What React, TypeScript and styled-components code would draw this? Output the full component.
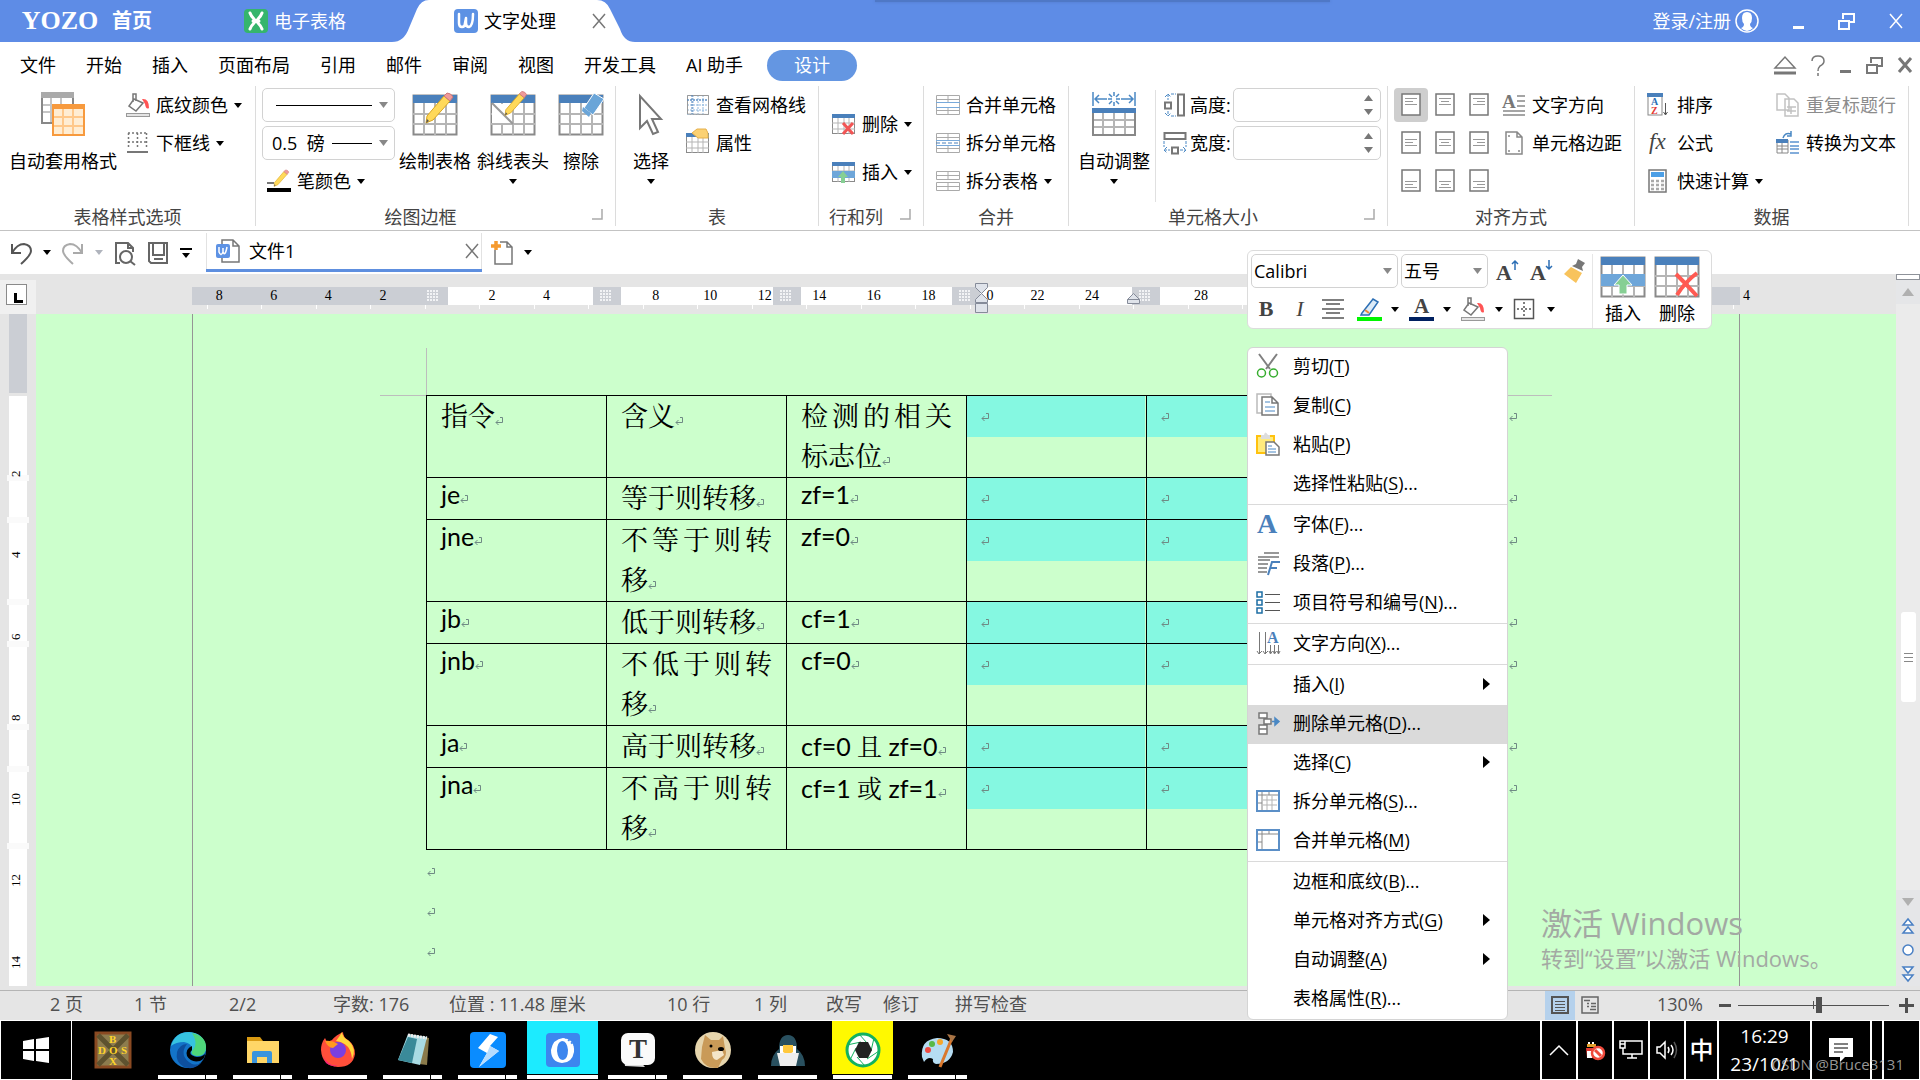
import React from 'react';
import styled, { createGlobalStyle, css } from 'styled-components';

const UI_FONT = '"Open Sans", "Noto Sans CJK SC", sans-serif';
const DOC_FONT = 'Lato, "Noto Serif CJK SC", "Noto Sans CJK SC", sans-serif';
const SERIF = '"Liberation Serif", "Noto Sans CJK SC", serif';

const GlobalStyle = createGlobalStyle`
  *, *::before, *::after { box-sizing: border-box; }
  body { margin: 0; font: 18px/24px ${UI_FONT}; color: #000; background: #e5e5e5; }
  button, input, select { font: inherit; color: inherit; margin: 0; padding: 0; border: 0; background: none; }
  svg { display: block; flex: none; overflow: visible; }
`;

const App_ = styled.div`
  position: relative;
  min-height: 100vh;
  display: flex;
  flex-direction: column;
  overflow: hidden;
`;

/* ---------- title bar ---------- */
const TitleBar = styled.header`
  display: flex;
  align-items: center;
  height: 42px;
  background: #5e8ce6;
  color: #fff;
  flex: none;
`;
const TopShade = styled.div`
  position: absolute;
  top: 0;
  left: 875px;
  width: 455px;
  height: 2px;
  background: #4f78c6;
  box-shadow: 0 0 3px #4f78c6;
`;
const Brand = styled.button`
  display: flex;
  align-items: center;
  gap: 13px;
  margin-left: 21px;
  width: 223px;
  font-size: 20px;
  font-weight: 700;
  white-space: nowrap;
`;
const BrandName = styled.span`
  font: 700 26px/30px ${SERIF};
  width: 78px;
`;
const AppTab = styled.button`
  display: flex;
  align-items: center;
  gap: 6px;
  width: 148px;
  white-space: nowrap;
`;
const ActiveTab = styled.div`
  position: relative;
  display: flex;
  align-items: center;
  width: 243px;
  height: 42px;
  padding-left: 62px;
  gap: 36px;
  color: #000;
`;
const TabShape = styled.svg`
  position: absolute;
  inset: 0;
`;
const TabMain = styled.button`
  position: relative;
  display: flex;
  align-items: center;
  gap: 6px;
  white-space: nowrap;
`;
const PlainButton = styled.button`
  position: relative;
  display: flex;
  align-items: center;
`;
const WindowControls = styled.div`
  display: flex;
  align-items: center;
  margin-left: auto;
  padding-right: 17px;
  gap: 34px;
`;
const Login = styled.button`
  display: flex;
  align-items: center;
  gap: 4px;
  white-space: nowrap;
`;

/* ---------- menu row ---------- */
const MenuRow = styled.nav`
  display: flex;
  align-items: center;
  height: 44px;
  padding: 2px 8px 0 20px;
  background: #fff;
  flex: none;
`;
const MenuTabs = styled.div`
  display: flex;
  gap: 30px;
  align-items: center;
`;
const MenuTab = styled.button`
  white-space: nowrap;
`;
const ActiveMenuTab = styled.button`
  margin-left: 24px;
  width: 90px;
  height: 31px;
  border-radius: 16px;
  background: #6496e2;
  color: #fff;
`;
const DocControls = styled.div`
  display: flex;
  align-items: center;
  gap: 15px;
  margin-left: auto;
`;

/* ---------- ribbon ---------- */
const Ribbon = styled.div`
  display: flex;
  height: 145px;
  background: #fff;
  border-bottom: 1px solid #c3c3c3;
  flex: none;
`;
const Section = styled.section<{ $w: number }>`
  flex: none;
  width: ${(p) => p.$w}px;
  height: 140px;
  border-right: 1px solid #dcdcdc;
  display: flex;
  flex-direction: column;
`;
const SectionBody = styled.div<{ $left: number; $right?: number; $spread?: boolean }>`
  display: flex;
  height: 114px;
  padding-left: ${(p) => p.$left}px;
  padding-right: ${(p) => p.$right ?? 0}px;
  justify-content: ${(p) => (p.$spread ? 'space-between' : 'flex-start')};
`;
const SectionFoot = styled.div`
  display: flex;
  margin-top: 8px;
  height: 18px;
  line-height: 18px;
  color: #444;
`;
const SectionLabel = styled.span`
  flex: 1;
  text-align: center;
  white-space: nowrap;
`;
const Launcher = styled.button`
  width: 30px;
  display: flex;
  padding: 1px 0 0 7px;
`;
const Stack = styled.div<{ $gap?: number; $top?: number }>`
  display: flex;
  flex-direction: column;
  align-items: flex-start;
  margin-left: ${(p) => p.$gap ?? 0}px;
  padding-top: ${(p) => p.$top ?? 0}px;
`;
const RowButton = styled.button<{ $h?: number; $pad?: number }>`
  display: flex;
  align-items: center;
  gap: 6px;
  height: ${(p) => p.$h ?? 38}px;
  padding-left: ${(p) => p.$pad ?? 0}px;
  white-space: nowrap;
  &:disabled { color: #8c8c8c; }
`;
const BigButton = styled.button<{ $w: number; $gap?: number }>`
  display: flex;
  flex-direction: column;
  align-items: center;
  width: ${(p) => p.$w}px;
  margin-left: ${(p) => p.$gap ?? 0}px;
  padding-top: 6px;
  white-space: nowrap;
`;
const BigLabel = styled.span`
  margin: 12px 0 5px;
  line-height: 26px;
`;
const FieldRow = styled.div`
  display: flex;
  align-items: center;
  height: 38px;
`;
const SelectShell = styled.div<{ $w: number }>`
  position: relative;
  display: flex;
  align-items: center;
  width: ${(p) => p.$w}px;
  height: 34px;
  border: 1px solid #d2d2d2;
  border-radius: 5px;
  background: #fff;
  select {
    appearance: none;
    width: 100%;
    height: 32px;
    line-height: 30px;
    outline: 0;
  }
`;
const SelectDecor = styled.svg`
  position: absolute;
  right: 5px;
  top: 0;
  pointer-events: none;
`;
const LineSelect = styled.select`
  padding-left: 9px;
`;
const FontSelect = styled.select`
  padding-left: 2px;
`;
const Divider = styled.div`
  width: 1px;
  height: 112px;
  margin: 4px 7px 0 5px;
  background: #e0e0e0;
`;
const FieldLabel = styled.label`
  display: flex;
  align-items: center;
  gap: 3px;
  width: 70px;
  white-space: nowrap;
`;
const SizeField = styled.div`
  display: flex;
  width: 148px;
  height: 34px;
  border: 1px solid #d2d2d2;
  border-radius: 5px;
  input { flex: 1; min-width: 0; padding-left: 8px; outline: 0; }
`;
const Spinner = styled.div`
  display: flex;
  flex-direction: column;
  justify-content: center;
  gap: 8px;
  padding-right: 7px;
`;
const AlignGrid = styled.div`
  display: grid;
  grid-template-columns: repeat(3, 34px);
  grid-template-rows: repeat(3, 38px);
  align-items: center;
`;
const AlignButton = styled.button<{ $on?: boolean }>`
  display: flex;
  align-items: center;
  justify-content: center;
  height: 34px;
  border-radius: 4px;
  background: ${(p) => (p.$on ? '#cecece' : 'none')};
`;

/* ---------- quick access and document tabs ---------- */
const QuickBar = styled.div`
  display: flex;
  align-items: center;
  height: 43px;
  background: #fff;
  flex: none;
`;
const QuickTools = styled.div`
  display: flex;
  align-items: center;
  gap: 11px;
  width: 206px;
  padding-left: 10px;
`;
const DocTab = styled.div`
  display: flex;
  align-items: center;
  width: 276px;
  height: 39px;
  padding: 0 3px 0 10px;
  border-bottom: 3px solid #5e8fdf;
  box-shadow: inset 1px 0 #e2e2e2, inset -1px 0 #e2e2e2;
`;
const DocTabName = styled.button`
  display: flex;
  align-items: center;
  gap: 9px;
  flex: 1;
`;
const NewDoc = styled.button`
  display: flex;
  align-items: center;
  gap: 9px;
  margin-left: 9px;
`;

/* ---------- workspace ---------- */
const Workspace = styled.div`
  flex: 1;
  display: grid;
  grid-template-columns: 36px 1fr 24px;
  grid-template-rows: 40px 1fr;
  padding-bottom: 4px;
  background: #e5e5e5;
`;
const Corner = styled.div`
  display: flex;
  margin-top: 6px;
  padding: 4px 0 0 6px;
  background: #f0f0f0;
`;
const TabStop = styled.button`
  width: 21px;
  height: 21px;
  border: 1px solid #8a8a8a;
  background: #fff;
  display: flex;
  padding: 8px 0 0 7px;
`;
const HRuler = styled.div`
  display: flex;
  justify-content: center;
  padding-top: 13px;
  overflow: hidden;
`;
const HTrack = styled.div`
  position: relative;
  display: flex;
  width: 1548px;
  height: 18px;
  background: #fff;
`;
const Seg = styled.div<{ $w: number; $c?: string }>`
  width: ${(p) => p.$w}px;
  height: 18px;
  background: ${(p) => p.$c ?? 'transparent'};
  display: flex;
  justify-content: flex-end;
  padding: 3px 9px 0 0;
`;
const HLabels = styled.div`
  position: absolute;
  left: 0;
  top: 0;
  width: 1582px;
  display: flex;
  font: 14px/18px ${SERIF};
  span { flex: 1; text-align: center; white-space: pre; }
`;
const HTicks = styled.div`
  position: absolute;
  left: 15px;
  right: 0;
  top: 18px;
  height: 4px;
  background: repeating-linear-gradient(90deg, #fff 0 1px, transparent 1px 54px, #fff 54px 55px, transparent 55px 109px);
`;
const RulerMarker = styled.svg<{ $x: number; $y: number }>`
  position: absolute;
  left: ${(p) => p.$x}px;
  top: ${(p) => p.$y}px;
`;
const VRuler = styled.div`
  position: relative;
  display: flex;
  flex-direction: column;
  align-items: center;
  overflow: hidden;
`;
const VBlock = styled.div<{ $h?: number; $gray?: boolean }>`
  width: 18px;
  ${(p) => (p.$h ? css`height: ${p.$h}px;` : css`flex: 1;`)}
  background: ${(p) => (p.$gray ? '#cbced4' : '#fff')};
`;
const VGap = styled.div`
  height: 3px;
`;
const VMark = styled.div`
  width: 22px;
  height: 6px;
  background: #fafafa;
`;
const VLabels = styled.div`
  position: absolute;
  left: 7px;
  top: -44px;
  font: 13px/18px ${SERIF};
  span {
    display: flex;
    justify-content: center;
    width: 18px;
    height: 81px;
    writing-mode: vertical-rl;
    transform: rotate(180deg);
  }
  span:nth-child(even) { height: 82px; }
`;
const Canvas = styled.main`
  background: #ccffcc;
  display: flex;
  justify-content: center;
`;
const Page = styled.div`
  width: 1548px;
  border: solid #959595;
  border-width: 0 1px;
  padding-top: 34px;
`;
const MarginTop = styled.div`
  width: 47px;
  height: 47px;
  margin-left: 233px;
  border-left: 1px solid #bdbdbd;
`;
const TableLine = styled.div`
  display: flex;
  margin-left: 187px;
`;
const MarginRule = styled.div`
  width: 46px;
  height: 1px;
  background: #bdbdbd;
`;
const DocTable = styled.table`
  border-collapse: collapse;
  table-layout: fixed;
  width: 1127px;
  font: 27px/40px ${DOC_FONT};
  td { padding: 0; vertical-align: top; }
`;
const Tr = styled.tr<{ $tall?: boolean }>`
  height: ${(p) => (p.$tall ? 82 : 42)}px;
`;
const Td = styled.td`
  border: 1px solid #000;
`;
const CellText = styled.div<{ $latin?: boolean; $mixed?: boolean }>`
  height: 40px;
  margin: 0 14px;
  text-align: justify;
  font-size: ${(p) => (p.$latin || p.$mixed ? 25 : 27)}px;
  line-height: ${(p) => (p.$latin ? 32 : 40)}px;
  svg { margin-right: -9px; }
`;
const Selected = styled.div`
  height: 41px;
  padding-left: 14px;
  margin-right: 1px;
  line-height: 32px;
  background: #85f8e1;
`;
const EndMark = styled.div<{ $ruled?: boolean }>`
  padding-left: 2px;
  line-height: 32px;
  ${(p) => p.$ruled && css`box-shadow: 0 -1px #bdbdbd;`}
`;
const Paras = styled.div`
  margin-left: 234px;
  font: 18px/40px ${DOC_FONT};
`;
const MarkSvg = styled.svg`
  display: inline-block;
`;

const Scroll = styled.div`
  grid-column: 3;
  grid-row: 1 / 3;
  display: flex;
  flex-direction: column;
  align-items: center;
  background: #ebebeb;
`;
const SplitHandle = styled.div`
  width: 24px;
  height: 6px;
  border: 1px solid #8e9299;
  background: #fff;
`;
const ScrollButton = styled.button`
  display: flex;
  justify-content: center;
  align-items: center;
  width: 24px;
  height: 24px;
  background: #e5e6e8;
`;
const ScrollThumb = styled.div`
  display: flex;
  align-items: center;
  justify-content: center;
  width: 15px;
  height: 90px;
  margin: 308px 0 auto;
  border-radius: 3px;
  background: #fff;
`;

/* ---------- status bar ---------- */
const StatusBar = styled.footer`
  display: flex;
  align-items: center;
  height: 30px;
  border-top: 1px solid #b4b4b4;
  background: #e5e5e5;
  color: #505050;
  padding: 0 6px 3px 50px;
  flex: none;
`;
const Stat = styled.span<{ $w: number }>`
  width: ${(p) => p.$w}px;
  white-space: nowrap;
`;
const StatusRight = styled.div`
  display: flex;
  align-items: center;
  margin-left: auto;
`;
const ViewButton = styled.button<{ $on?: boolean }>`
  width: 30px;
  height: 29px;
  display: flex;
  align-items: center;
  justify-content: center;
  margin-top: 2px;
  background: ${(p) => (p.$on ? '#b5d1ec' : 'none')};
`;
const Percent = styled.span`
  width: 62px;
  margin-left: 52px;
`;
const Zoom = styled.input`
  appearance: none;
  width: 151px;
  height: 18px;
  margin: 2px 10px 0 7px;
  background: linear-gradient(#505050, #505050) 0 9px / 100% 1px no-repeat,
    linear-gradient(#505050, #505050) 50% 5px / 1px 8px no-repeat;
  &::-webkit-slider-thumb {
    appearance: none;
    width: 6px;
    height: 16px;
    background: #505050;
  }
`;

/* ---------- taskbar ---------- */
const Taskbar = styled.footer`
  position: relative;
  display: flex;
  height: 60px;
  background: #000;
  border-top: 1px solid #fff;
  color: #fff;
  flex: none;
`;
const Start = styled.button`
  width: 72px;
  border: 1px solid #fff;
  border-top: 0;
  display: flex;
  align-items: center;
  justify-content: center;
`;
const Apps = styled.div`
  display: flex;
  padding-left: 3px;
`;
const TaskApp = styled.button<{ $bg?: string; $line?: 'full' | 'split' | 'wide' }>`
  position: relative;
  width: 75px;
  display: flex;
  justify-content: center;
  padding-top: 11px;
  &::before {
    content: '';
    position: absolute;
    inset: 0 ${(p) => (p.$line === 'wide' ? 2 : 7)}px 6px;
    background: ${(p) => p.$bg ?? 'none'};
  }
  &::after {
    content: '';
    position: absolute;
    left: ${(p) => (p.$line === 'wide' ? 2 : 8)}px;
    right: ${(p) => (p.$line === 'wide' ? 2 : 8)}px;
    bottom: 1px;
    height: 4px;
    background: ${(p) =>
      !p.$line ? 'none' : p.$line === 'split' ? 'linear-gradient(90deg, #fff 0 47px, #000 47px 48px, #fff 48px)' : '#fff'};
  }
  svg { position: relative; }
`;
const Tray = styled.div`
  display: flex;
  margin-left: auto;
  border-right: 1px solid #fff;
`;
const TrayItem = styled.button<{ $w: number }>`
  width: ${(p) => p.$w}px;
  border-left: 2px solid #fff;
  border-bottom: 1px solid #fff;
  display: flex;
  align-items: center;
  justify-content: center;
  font-size: 24px;
  font-weight: 500;
`;
const Clock = styled(TrayItem)`
  flex-direction: column;
  font-size: 19px;
  font-weight: 400;
  line-height: 28px;
`;
const Credit = styled.span`
  position: absolute;
  right: 16px;
  bottom: 4px;
  font-size: 15px;
  line-height: 24px;
  color: rgba(190, 190, 190, 0.8);
`;

/* ---------- floating surfaces ---------- */
const MiniBar = styled.div`
  position: absolute;
  left: 1247px;
  top: 250px;
  display: flex;
  width: 465px;
  height: 79px;
  padding: 3px 3px 0;
  border: 1px solid #dcdcdc;
  border-radius: 6px;
  background: #fff;
`;
const MiniLeft = styled.div`
  width: 342px;
  margin-right: 3px;
  border-right: 1px solid #e6e6e6;
`;
const MiniRow = styled.div<{ $gap: number; $h: number }>`
  display: flex;
  align-items: center;
  height: ${(p) => p.$h}px;
  gap: ${(p) => p.$gap}px;
`;
const MiniButton = styled.button<{ $w: number }>`
  width: ${(p) => p.$w}px;
  height: 34px;
  display: flex;
  align-items: center;
  justify-content: space-between;
`;
const Letter = styled.span<{ $italic?: boolean }>`
  width: 100%;
  text-align: center;
  font: 700 22px/26px ${SERIF};
  color: #444;
  ${(p) => p.$italic && css`font-style: italic; font-weight: 400;`}
`;
const MiniBig = styled.button`
  width: 54px;
  display: flex;
  flex-direction: column;
  align-items: center;
  gap: 3px;
`;
const Menu = styled.div`
  position: absolute;
  left: 1247px;
  top: 347px;
  width: 261px;
  border: 1px solid #d4d4d4;
  border-radius: 6px;
  background: #fff;
  z-index: 2;
`;
const Item = styled.button<{ $on?: boolean }>`
  display: flex;
  align-items: center;
  width: 100%;
  height: 39px;
  padding: 0 17px 3px 8px;
  background: ${(p) => (p.$on ? '#dadada' : 'none')};
  text-align: left;
  u { text-underline-offset: 3px; text-decoration-thickness: 1px; }
`;
const ItemIcon = styled.span`
  width: 37px;
  height: 24px;
`;
const ItemText = styled.span`
  flex: 1;
  white-space: nowrap;
`;
const Sep = styled.hr`
  height: 1px;
  margin: 0 0 1px;
  border: 0;
  background: #dadada;
`;
const Activate = styled.div`
  position: absolute;
  left: 1541px;
  top: 902px;
  color: #a3a9a3;
  pointer-events: none;
  white-space: nowrap;
`;
const ActivateTitle = styled.div`
  font-size: 31px;
  line-height: 42px;
`;
const ActivateText = styled.div`
  font-size: 22px;
  line-height: 28px;
`;

/* ---------- drawings ---------- */
const Caret = ({ c = '#000' }: { c?: string }) => (
  <svg width="8" height="5"><path d="M0 0h8L4 5z" fill={c} /></svg>
);
const Mark = () => (
  <MarkSvg width="9" height="9" viewBox="0 0 9 9" fill="none" stroke="#6f8a84">
    <path d="M5 .5h2.500v5H1M3.500 3 1 5.500 3.500 8" />
  </MarkSvg>
);
const Cross = ({ s = 14, c = '#777', w = 1.5 }: { s?: number; c?: string; w?: number }) => (
  <svg width={s} height={s} viewBox="0 0 14 14" stroke={c} strokeWidth={w}><path d="M1 0l12 14M13 0L1 14" /></svg>
);
const Restore = ({ c }: { c: string }) => (
  <svg width="17" height="17" fill="none" stroke={c} strokeWidth="2"><path d="M5 6V1h11v8h-4M1 8h10v8H1z" /></svg>
);
const Dash = ({ c, w = 11 }: { c: string; w?: number }) => (
  <svg width={w} height="19"><path d={`M0 15.500h${w}`} stroke={c} strokeWidth="3" /></svg>
);
const SheetLogo = () => (
  <svg width="24" height="24"><rect width="24" height="24" rx="4" fill="#35b56c" /><path d="M6 4q1 3 4 6 2 2 0 4-3 3-4 6M18 4q-1 3-4 6-2 2 0 4 3 3 4 6M9 12h6" stroke="#fff" strokeWidth="3" fill="none" strokeLinecap="round" /></svg>
);
const WordLogo = ({ s = 24 }: { s?: number }) => (
  <svg width={s} height={s} viewBox="0 0 24 24"><rect width="24" height="24" rx="4" fill="#5d92e4" /><path d="M5 5v9q0 4 3 4t3-4l1-5M12 9v5q0 4 3 4 4-1 4-13" stroke="#fff" strokeWidth="2.500" fill="none" strokeLinecap="round" /></svg>
);

type GridProps = { w?: number; h?: number; head?: string; line?: string; children?: React.ReactNode };
const Grid = ({ w = 44, h = 40, head = '#4a80bb', line = '#b5b5b5', children }: GridProps) => {
  const t = h / 5;
  const big = w > 30;
  const xs = [1, 2, 3].map((i) => `M${Math.round((w * i) / 4)} ${t}V${h}`).join('');
  const ys = [1, 2].map((i) => `M0 ${Math.round(t + ((h - t) * i) / 3)}H${w}`).join('');
  return (
    <svg width={big ? w : 24} height={big ? 44 : 24} viewBox={big ? `0 -3 ${w} 44` : '0 -2 24 24'}>
      <rect x=".5" y=".5" width={w - 1} height={h - 1} fill="#fff" stroke="#8a8a8a" strokeWidth={big ? 2 : 1} />
      <path d={xs + ys} stroke={line} strokeWidth={big ? 2 : 1} fill="none" />
      <rect width={w} height={t} fill={head} />
      {children}
    </svg>
  );
};
const Pencil = ({ t }: { t?: string }) => (
  <g transform={t}><path d="M0 28l1-7L18 1l6 5L7 25z" fill="#ffd95a" stroke="#d9a520" /><path d="M18 1l3-3q4 0 6 4l-3 4z" fill="#ef9a9a" stroke="#cf7777" /><path d="M0 28l1-4 2 2z" fill="#555" /></g>
);
const AutoFormat = () => (
  <svg width="44" height="44" fill="#fff">
    <rect x="1" y="1" width="31" height="30" stroke="#888" strokeWidth="2" /><path d="M0 0h33v6H0z" fill="#aaa" /><path d="M2 13h29M2 20h29M10 6v24M20 6v24" stroke="#c5c5c5" strokeWidth="2" />
    <rect x="12" y="13" width="31" height="30" fill="#ffedd3" stroke="#f79a3e" strokeWidth="2" /><path d="M11 12h33v5H11z" fill="#f79a3e" /><path d="M13 25h29M13 34h29M22 17v25M32 17v25" stroke="#ffc88a" strokeWidth="2" />
  </svg>
);
const Bucket = () => (
  <svg width="24" height="24" fill="none"><path d="M16 6q7-1 7 9-3 2-4-4z" fill="#ff5454" /><path d="M8 6l9 4-7 8-7-5zM7 9V1h3v7" fill="#fff" stroke="#777" strokeWidth="1.500" /><rect x=".5" y="20.500" width="23" height="3" fill="#e4e4e4" stroke="#999" /></svg>
);
const BottomBorder = () => (
  <svg width="24" height="24" stroke="#777" fill="none"><path d="M2 2h19M2 11h19M2.500 2v16M11.500 2v16M20.500 2v16" strokeWidth="1.500" strokeDasharray="2 2" /><path d="M1 21h21" strokeWidth="2" /></svg>
);
const PenColor = () => (
  <svg width="24" height="24"><path d="M0 14h7" stroke="#777" strokeWidth="2" /><Pencil t="translate(7 2) scale(.55)" /><path d="M0 19h24v4H0z" /></svg>
);
const DrawTable = () => <Grid><Pencil t="translate(13 0)" /></Grid>;
const DiagonalHead = () => <Grid><path d="M1 9h20v19H1z" fill="#fff" /><path d="M1 8l21 21" stroke="#999" strokeWidth="2" /><Pencil t="translate(14 -2) scale(.8)" /></Grid>;
const Eraser = () => <Grid><path d="M35-2l10 6-11 16-9-7z" fill="#6aa5d8" stroke="#fff" /><path d="M24 12l8 6-2 4-7-6z" fill="#6aa5d8" /></Grid>;
const Cursor = () => (
  <svg width="24" height="44" fill="#fff" stroke="#777" strokeWidth="2"><path d="M1 4v32l7-7 6 13 5-2-6-13h9z" /></svg>
);
const GridLines = () => (
  <svg width="24" height="24" fill="none"><path d="M1.500 2.500h21v19h-21zM1 7h21M1 12h21M1 17h21M7 2v19M12 2v19M17 2v19" stroke="#8db6dd" strokeDasharray="2 1" /><path d="M1.500 21V2.500h21V21.500z" stroke="#9a9a9a" /><path d="M1 7h21M6 2v19" stroke="#4a80bb" strokeDasharray="2 1" /></svg>
);
const Props = () => <Grid w={23} h={20}><path d="M6 0l5-4h9q3 4 2 9h-10z" fill="#fbd173" stroke="#e5b04c" /></Grid>;
const DelSmall = () => <Grid w={23} h={20}><path d="M11 9l10 11M21 9L11 20" stroke="#f25555" strokeWidth="3" /></Grid>;
const InsSmall = () => <Grid w={23} h={20}><path d="M0 9h23v7H0z" fill="#6ea6d9" /><path d="M11 9l5 6h-3v6H9v-6H6z" fill="#86cf94" /></Grid>;
const MergeIcon = ({ kind }: { kind: 'merge' | 'split' | 'table' }) => (
  <svg width="24" height="24" fill="none" stroke="#aaa">
    {kind === 'table' ? (
      <path d="M.5 2.500h23v8H.5zM.5 13.500h23v8H.5zM.5 6.500h23M.5 17.500h23M12 2v8M12 13v8" />
    ) : (
      <>
        <path d="M.5 2.500h23v19H.5zM.5 6.500h23M.5 17.500h23M12 2v7M12 15v7" />
        <path d="M0 9.500h24M0 14.500h24" stroke="#78a9da" />
        {kind === 'split' && <path d="M0 12h24" stroke="#4a80bb" strokeDasharray="4 2" />}
      </>
    )}
  </svg>
);
const AutoFit = () => (
  <svg width="44" height="44" fill="none">
    <path d="M1 0v14M43 0v14M3 7h12M29 7h12M7 3L3 7l4 4M37 3l4 4-4 4M22 0v4M22 10v4M17 2l3 3M27 2l-3 3M17 12l3-3M27 12l-3-3M16 7h4M24 7h4" stroke="#4a88c4" strokeWidth="1.500" />
    <rect x="1" y="17" width="42" height="26" stroke="#888" strokeWidth="2" /><path d="M0 16h44v5H0z" fill="#4a80bb" /><path d="M2 28h40M2 35h40M11 21v21M22 21v21M33 21v21" stroke="#b5b5b5" strokeWidth="2" />
  </svg>
);
const HeightIcon = () => (
  <svg width="24" height="24" fill="none"><path d="M15 1.500h6v21h-6zM2 9.500h6v6H2z" stroke="#777" strokeWidth="2" /><path d="M5 1v6M5 18v5M2 4l3-3 3 3M2 20l3 3 3-3M8 1h5M8 23h5" stroke="#4a88c4" strokeDasharray="3 1" /></svg>
);
const WidthIcon = () => (
  <svg width="24" height="24" fill="none"><path d="M1.500 2h21v6h-21zM9 16.500h6v6H9z" stroke="#777" strokeWidth="2" /><path d="M1 19h6M17 19h6M4 16l-3 3 3 3M20 16l3 3-3 3M1 10v6M23 10v6" stroke="#4a88c4" strokeDasharray="3 1" /></svg>
);
const AlignIcon = ({ v, h }: { v: number; h: number }) => {
  const y = [5, 8, 12][v];
  const rows = [12, 8, 12].map((len, i) => {
    const x = h === 0 ? 4 : h === 1 ? 10 - len / 2 : 16 - len;
    return `M${x} ${y + i * 3 + 0.5}h${len}`;
  });
  return (
    <svg width="20" height="24" fill="none"><rect x="1" y="1" width="18" height="21" fill="#fff" stroke="#777" strokeWidth="1.500" /><path d={rows.join('')} stroke="#999" /></svg>
  );
};
const TextDir = () => (
  <svg width="24" height="24"><text x="0" y="15" fontFamily="Liberation Serif" fontWeight="700" fontSize="19" fill="#777">A</text><path d="M15 3h8M15 8h8M15 13h8M1 18h22M1 22h22" stroke="#888" strokeWidth="1.500" /></svg>
);
const CellMargin = () => (
  <svg width="24" height="24" fill="none" stroke="#888" strokeWidth="1.500"><path d="M4 1h11l5 5v17H4zM15 1v5h5" /><path d="M7 4v2M7 19v2M17 19v2" /></svg>
);
const SortIcon = () => (
  <svg width="24" height="24"><rect x="1" y="1" width="14" height="21" fill="#fff" stroke="#888" /><path d="M0 0h16v4H0z" fill="#4a80bb" /><text x="4" y="12" fontFamily="Liberation Serif" fontWeight="700" fontSize="10" fill="#2c6fb5">A</text><text x="4" y="21" fontFamily="Liberation Serif" fontWeight="700" fontSize="10" fill="#e53935">Z</text><path d="M18.500 10v12M16.500 19l2 3 2-3" stroke="#555" fill="none" /></svg>
);
const FxIcon = () => (
  <svg width="24" height="24"><text x="2" y="18" fontFamily="Liberation Serif" fontStyle="italic" fontSize="23" fill="#444">fx</text></svg>
);
const CalcIcon = () => (
  <svg width="24" height="24"><rect x="2" y="1" width="17" height="22" fill="#fff" stroke="#777" strokeWidth="1.500" /><path d="M4 3h13v5H4z" fill="#4c9fe6" /><path d="M4 12h13M4 16h13M4 20h13" stroke="#aaa" strokeWidth="2.500" strokeDasharray="3 2" /></svg>
);
const RepeatIcon = () => (
  <svg width="24" height="24" fill="#fff" stroke="#c2c2c2" strokeWidth="1.500"><path d="M1 1h8l4 4v12H1zM9 6h9l4 4v13H9zM11 14h9M11 18h9M15 14v7" /></svg>
);
const ConvertIcon = () => (
  <svg width="24" height="24" fill="none"><path d="M7 7q2-6 8-4M15 0v5h-4" stroke="#4a88c4" strokeWidth="1.500" /><path d="M1 9h11v13H1zM1 15h11M1 18h11M6 12v10" stroke="#888" /><path d="M0 8h12v4H0z" fill="#4a80bb" /><path d="M14 11h9M14 15h9M14 18h9M14 22h9" stroke="#5b93cf" strokeWidth="1.500" /></svg>
);
const Undo = ({ c, flip }: { c: string; flip?: boolean }) => (
  <svg width="22" height="24" fill="none" stroke={c} strokeWidth="2"><g transform={flip ? 'matrix(-1 0 0 1 22 0)' : undefined}><path d="M2 3v9h9M2 12Q7 3 14 3q7 1 7 7 0 4-10 13" /></g></svg>
);
const Preview = () => (
  <svg width="22" height="24" fill="none" stroke="#666" strokeWidth="2"><path d="M6 22H2V2h12l5 5v4M14 2v5h5" /><circle cx="12" cy="16" r="6" /><path d="M16 20l5 4" /></svg>
);
const Save = () => (
  <svg width="22" height="24" fill="none" stroke="#666" strokeWidth="2"><path d="M2 2h18v20H4l-2-2zM6 2v12h11V2M7 18h9" /></svg>
);
const WordDoc = () => (
  <svg width="24" height="24"><path d="M6 1h11l6 6v16H6zM17 1v6h6" fill="#fff" stroke="#777" strokeWidth="1.500" /><rect y="5" width="14" height="14" rx="2" fill="#5d92e4" /><path d="M3 8v5q2 5 4 0V9v4q2 5 4-5" stroke="#fff" strokeWidth="1.500" fill="none" /></svg>
);
const NewDocIcon = () => (
  <svg width="24" height="24"><path d="M4 9v14h17V6l-5-5H9M16 1v5h5" fill="none" stroke="#777" strokeWidth="1.500" /><path d="M5 0v9M0 5h10" stroke="#f59a2f" strokeWidth="3.500" /></svg>
);
const User = () => (
  <svg width="24" height="24"><circle cx="12" cy="12" r="11" fill="none" stroke="#fff" strokeWidth="1.500" /><path d="M12 3q5 0 5 6 0 4-2 6 0 3 3 4-6 6-12 0 3-1 3-4-2-2-2-6 0-6 5-6z" fill="#fff" /></svg>
);
const Brush = () => (
  <svg width="22" height="24"><path d="M14 0l7 4-3 4 1 4-11-5 4-2z" fill="#777" /><path d="M7 8l11 6-6 10L0 15z" fill="#f8c35c" /></svg>
);
const InsBig = () => <Grid><path d="M0 17h44v12H0z" fill="#6ea6d9" /><path d="M22 18l9 10h-5v9h-8v-9h-5z" fill="#86cf94" stroke="#fff" /></Grid>;
const DelBig = () => <Grid><path d="M21 17q10 10 21 22M42 16Q30 25 22 38" stroke="#ff5a52" strokeWidth="4" fill="none" /></Grid>;

const Scissors = () => (
  <svg width="24" height="24" fill="none"><path d="M3 0l11 15M21 0L10 15" stroke="#808080" strokeWidth="2" /><circle cx="5.500" cy="19" r="4" stroke="#36ad2e" strokeWidth="1.500" /><circle cx="17.500" cy="19" r="4" stroke="#36ad2e" strokeWidth="1.500" /></svg>
);
const Copy = () => (
  <svg width="24" height="24" fill="#fff"><path d="M1 1h14v19H1z" stroke="#bbb" strokeWidth="1.500" /><path d="M6 4h10l6 6v12H6zM16 4v6h6" stroke="#777" strokeWidth="1.500" /><path d="M9 9h5M9 14h10M9 18h10" stroke="#4a88c4" /></svg>
);
const Paste = () => (
  <svg width="24" height="24"><path d="M1 4h17v17H1z" fill="#ffeb7d" stroke="#ffc20e" strokeWidth="2" /><path d="M5 7V3h3q1-5 4 0h2v4z" fill="#ddd" /><path d="M10 10h8l5 5v8H10z" fill="#fff" stroke="#777" strokeWidth="1.500" /><path d="M12 14h4M12 17h8M12 20h8" stroke="#4a88c4" /></svg>
);
const FontA = () => (
  <svg width="24" height="24"><text x="1" y="21" fontFamily="Liberation Serif" fontWeight="700" fontSize="28" fill="#4a80bb">A</text></svg>
);
const Paragraph = () => (
  <svg width="24" height="24"><path d="M8 2h15M2 6h21M2 9h12M2 13h10M2 17h9M2 21h9" stroke="#777" strokeWidth="1.500" /><path d="M12 24l4-13h8M14 17h7" fill="none" stroke="#4a80bb" strokeWidth="2" /></svg>
);
const Bullets = () => (
  <svg width="24" height="24" fill="none"><path d="M1 2h5v5H1zM1 10h5v5H1zM1 18h5v5H1z" stroke="#1c6ea4" strokeWidth="1.500" /><path d="M9 4.500h15M9 12.500h15M9 20.500h15" stroke="#555" /></svg>
);
const VertText = () => (
  <svg width="24" height="24"><path d="M3.500 1v21M9.500 1v21M14.500 14v8M18.500 14v8M22.500 14v8M1 20l2 3 3-3M7 20l2 3 3-3M13 20l1.500 3 2-3M17 20l1.500 3 2-3M21 20l1.500 3 1.500-3" fill="none" stroke="#777" /><text x="11" y="12" fontFamily="Liberation Serif" fontWeight="700" fontSize="16" fill="#4a80bb">A</text></svg>
);
const DelCells = () => (
  <svg width="24" height="24" fill="#fff" stroke="#777" strokeWidth="1.500"><path d="M3 2h8v5H3zM8 8h7v5H8zM3 14h8v9H3zM3 18h8" /><path d="M16 10.500h6M19 7l4 3.500-4 3.500z" stroke="#4a88c4" fill="#4a88c4" /></svg>
);
const CellGrid = ({ full }: { full?: boolean }) => (
  <svg width="24" height="24" fill="none"><path d="M1 2h22v20H1z" fill="#fff" stroke="#5b8fc7" strokeWidth="2" /><path d="M2 6h20M6 3v18M13 3v3M2 14h4" stroke="#888" />{full && <path d="M7 11h14M7 16h14M11 7v14M16 7v14" stroke="#b5b5b5" />}</svg>
);

/* ---------- taskbar drawings ---------- */
const WinLogo = () => (
  <svg width="26" height="26" fill="#fff"><path d="M0 4l11-2v10H0zM13 2l13-2v12H13zM0 14h11v10L0 22zM13 14h13v12l-13-2z" /></svg>
);
const DosBox = () => (
  <svg width="36" height="36"><rect x="1" y="1" width="34" height="34" fill="#8d7c4e" stroke="#8a4a22" strokeWidth="3" /><path d="M3 3l30 30M33 3L3 33" stroke="#5e522f" strokeWidth="5" /><g fontFamily="Liberation Serif" fontWeight="700" fontSize="11" fill="#ffd42a"><text x="14" y="11">B</text><text x="3" y="22">D</text><text x="14" y="22">O</text><text x="26" y="22">S</text><text x="14" y="33">X</text></g></svg>
);
const Edge = () => (
  <svg width="36" height="36"><circle cx="18" cy="18" r="18" fill="#1374c9" /><path d="M1 14Q5 0 19 0q15 1 17 15 0 9-9 9-8-1-5-6 0-7-8-8-8 0-13 4z" fill="#36c3e0" /><path d="M22 1q14 3 14 14 0 9-9 9-7-1-5-5 7-7 0-18z" fill="#4fd67b" /><path d="M17 12q-9 12 5 20 7 2 11-3-8 10-19 6-9-5-7-15 3-8 10-8z" fill="#0d4f9e" /><path d="M22 18q-5 5 5 7 5 0 8-3 0 5-5 7-9 2-13-5-2-7 5-10z" fill="#000" /></svg>
);
const Folder = () => (
  <svg width="36" height="36"><path d="M2 5h13l3 4H2z" fill="#d99a12" /><path d="M2 9h32v22H2z" fill="#ffd667" /><path d="M7 31V21q0-2 2-2h16q2 0 2 2v10h-5v-6H12v6z" fill="#3a94dd" /></svg>
);
const Firefox = () => (
  <svg width="36" height="36"><path d="M18 35Q2 34 1 18 1 11 5 6l2 4 5-2q4-5 11-8 0 5 5 8 7 5 7 14-2 13-17 13z" fill="#ff4f3a" /><path d="M22 0q0 5 7 9 8 8 3 18Q31 11 16 9q4-5 6-9z" fill="#ffd83a" /><path d="M3 24q6 12 17 9Q12 36 6 31z" fill="#f8217a" /><circle cx="18" cy="18" r="8" fill="#7a3fe0" /><path d="M5 9q7-1 13 3l-5 4q-5 0-8-7z" fill="#ff9a1f" /></svg>
);
const Notebook = () => (
  <svg width="36" height="36"><path d="M14 2l20 4-2 27-8-1z" fill="#8a7a4a" /><path d="M13 2l19 3-7 28-22-5z" fill="#a9dbe3" /><path d="M13 5L3 28l14 3 5-24z" fill="#3a8a99" /><path d="M13 3l19 3" stroke="#eee" strokeWidth="3" strokeDasharray="2 1" /></svg>
);
const Bolt = () => (
  <svg width="36" height="36"><rect width="36" height="36" rx="4" fill="#0a8cff" /><path d="M20 2L8 16l9 5-8 14 20-16-9-5 8-9z" fill="#fff" /><path d="M17 21l3-7 9 5L9 35z" fill="#b5dcff" /></svg>
);
const OLogo = () => (
  <svg width="36" height="36"><rect x="1" y="1" width="34" height="34" rx="4" fill="#3d86ee" /><path d="M18 6q12 1 11 14-2 11-12 11Q6 30 6 18 8 7 18 6zm-1 3q-5 1-5 10 1 9 6 9 5-1 5-10-1-9-6-9z" fill="#fff" /><path d="M20 5l10 9M23 5l8 6" stroke="#3d86ee" strokeWidth="1.500" strokeDasharray="2 2" /></svg>
);
const Typora = () => (
  <svg width="36" height="36"><path d="M1 8l4 26 20 1z" fill="#ddd" /><rect x="1" y="1" width="34" height="32" rx="7" fill="#fafafa" /><text x="9" y="26" fontFamily="Liberation Serif" fontWeight="700" fontSize="27" fill="#333">T</text></svg>
);
const Doge = () => (
  <svg width="36" height="36"><circle cx="18" cy="18" r="18" fill="#e6d5ad" /><path d="M7 15L10 3l6 5 8 0 4-4 2 12q3 8-3 12l-4 8q-12 1-17-9z" fill="#c99a58" /><path d="M17 20l10-2 2 5-7 5q-5 0-5-8z" fill="#f4e5c8" /><ellipse cx="26" cy="17" rx="3" ry="2" /><circle cx="16" cy="14" r="1.500" /></svg>
);
const Penguin = () => (
  <svg width="36" height="36"><path d="M9 17Q9 3 18 3t9 14q8 6 8 17H1q0-11 8-17z" fill="#29505f" /><path d="M10 14h16v8H10z" fill="#fff" /><path d="M13 13h10v7q-5 4-10 0z" fill="#ffc83d" /><path d="M7 21h22l-3 13H10z" fill="#eee" /></svg>
);
const Aperture = () => (
  <svg width="36" height="36"><circle cx="18" cy="18" r="16" fill="#fff" stroke="#12b25f" strokeWidth="3" /><path d="M14 2l8 9M29 6l-3 13M34 19l-12 8M20 34l-8-9M5 28l6-12M2 13l14-3" stroke="#12b25f" /><path d="M14 10h9l4 8-4 8h-9l-4-8z" fill="#222" /></svg>
);
const Palette = () => (
  <svg width="36" height="36"><path d="M2 25Q0 8 17 6q16 0 16 14-3 12-17 12-4-1-3-5-5-3-9 3z" fill="#b5dcf2" /><circle cx="8" cy="18" r="3" fill="#ef4a40" /><circle cx="12" cy="12" r="3" fill="#57b947" /><circle cx="20" cy="10" r="3" fill="#f6a62a" /><path d="M32 6L20 35" stroke="#d9782d" strokeWidth="3" /><path d="M27 2l9 2-4 6z" fill="#a87445" /></svg>
);

const Footer = ({ text, launcher }: { text: string; launcher?: boolean }) => (
  <SectionFoot>
    <SectionLabel>{text}</SectionLabel>
    {launcher && (
      <Launcher aria-label={text}>
        <svg width="11" height="11"><path d="M10 0v10H0" fill="none" stroke="#aaa" strokeWidth="1.500" /></svg>
      </Launcher>
    )}
  </SectionFoot>
);

const Size = ({ id, label, icon }: { id: string; label: string; icon: React.ReactNode }) => (
  <FieldRow>
    <FieldLabel htmlFor={id}>{icon}{label}</FieldLabel>
    <SizeField>
      <input id={id} type="text" />
      <Spinner>
        <svg width="9" height="6"><path d="M0 6h9L4.500 0z" fill="#777" /></svg>
        <svg width="9" height="6"><path d="M0 0h9L4.500 6z" fill="#777" /></svg>
      </Spinner>
    </SizeField>
  </FieldRow>
);

const rows: { tall: boolean; cells: string[] }[] = [
  { tall: true, cells: ['指令', '含义', '检测的相关标志位'] },
  { tall: false, cells: ['je', '等于则转移', 'zf=1'] },
  { tall: true, cells: ['jne', '不等于则转移', 'zf=0'] },
  { tall: false, cells: ['jb', '低于则转移', 'cf=1'] },
  { tall: true, cells: ['jnb', '不低于则转移', 'cf=0'] },
  { tall: false, cells: ['ja', '高于则转移', 'cf=0 且 zf=0'] },
  { tall: true, cells: ['jna', '不高于则转移', 'cf=1 或 zf=1'] },
];

type MenuEntry = { t: string; k: string; tail?: string; icon?: React.ReactNode; sub?: boolean; on?: boolean };
const menu: MenuEntry[][] = [
  [
    { t: '剪切', k: 'T', icon: <Scissors /> },
    { t: '复制', k: 'C', icon: <Copy /> },
    { t: '粘贴', k: 'P', icon: <Paste /> },
    { t: '选择性粘贴', k: 'S', tail: '...' },
  ],
  [
    { t: '字体', k: 'F', tail: '...', icon: <FontA /> },
    { t: '段落', k: 'P', tail: '...', icon: <Paragraph /> },
    { t: '项目符号和编号', k: 'N', tail: '...', icon: <Bullets /> },
  ],
  [{ t: '文字方向', k: 'X', tail: '...', icon: <VertText /> }],
  [
    { t: '插入', k: 'I', sub: true },
    { t: '删除单元格', k: 'D', tail: '...', icon: <DelCells />, on: true },
    { t: '选择', k: 'C', sub: true },
    { t: '拆分单元格', k: 'S', tail: '...', icon: <CellGrid full /> },
    { t: '合并单元格', k: 'M', icon: <CellGrid /> },
  ],
  [
    { t: '边框和底纹', k: 'B', tail: '...' },
    { t: '单元格对齐方式', k: 'G', sub: true },
    { t: '自动调整', k: 'A', sub: true },
    { t: '表格属性', k: 'R', tail: '...' },
  ],
];

const hLabels = ['8', '6', '4', '2', '', '2', '4', '', '8', '10', '12', '14', '16', '18', '\u2002\u20020', '22', '24', '', '28', '', '', '', '', '', '', '', '', '', '4'];
const vLabels = ['2', '', '2', '4', '6', '8', '10', '12', '14'];
const G = '#cbced4';
const segs: [number, string?][] = [[256, G], [145], [28, G], [152], [28, G], [151], [28, G], [152], [28, G], [152], [28, G], [152], [248, G]];
const Dots = () => (
  <svg width="12" height="12"><path d="M0 1h12M0 4h12M0 7h12M0 10h12" stroke="#fff" strokeWidth="1.500" strokeDasharray="2 1" /></svg>
);

export default function App() {
  return (
    <App_>
      <GlobalStyle />
      <TitleBar>
        <Brand><BrandName>YOZO</BrandName>首页</Brand>
        <AppTab><SheetLogo />电子表格</AppTab>
        <ActiveTab>
          <TabShape width="243" height="42"><path d="M0 42q12 0 17-14L25 9q4-9 12-9h168q9 0 13 9l10 20q4 13 15 13z" fill="#fff" /></TabShape>
          <TabMain><WordLogo />文字处理</TabMain>
          <PlainButton aria-label="关闭"><Cross /></PlainButton>
        </ActiveTab>
        <WindowControls>
          <Login>登录/注册<User /></Login>
          <PlainButton aria-label="最小化"><Dash c="#fff" /></PlainButton>
          <PlainButton aria-label="还原"><Restore c="#fff" /></PlainButton>
          <PlainButton aria-label="关闭窗口"><Cross c="#fff" /></PlainButton>
        </WindowControls>
        <TopShade />
      </TitleBar>

      <MenuRow>
        <MenuTabs>
          {['文件', '开始', '插入', '页面布局', '引用', '邮件', '审阅', '视图', '开发工具', 'AI 助手'].map((t) => (
            <MenuTab key={t}>{t}</MenuTab>
          ))}
        </MenuTabs>
        <ActiveMenuTab>设计</ActiveMenuTab>
        <DocControls>
          <PlainButton aria-label="折叠"><svg width="22" height="20" fill="none" stroke="#777"><path d="M1 13L11 2l10 11z" strokeWidth="1.500" /><path d="M0 18h22" strokeWidth="3" /></svg></PlainButton>
          <PlainButton aria-label="帮助"><svg width="14" height="21" fill="none" stroke="#777" strokeWidth="1.500"><path d="M1 6q0-5 6-5t6 5q0 3-4 5-2 2-2 5M7 18v3" /></svg></PlainButton>
          <PlainButton aria-label="最小化文档"><Dash c="#777" /></PlainButton>
          <PlainButton aria-label="还原文档"><Restore c="#777" /></PlainButton>
          <PlainButton aria-label="关闭文档"><Cross w={3} /></PlainButton>
        </DocControls>
      </MenuRow>

      <Ribbon>
        <Section $w={256}>
          <SectionBody $left={9}>
            <BigButton $w={108}><AutoFormat /><BigLabel>自动套用格式</BigLabel></BigButton>
            <Stack $gap={9}>
              <RowButton><Bucket />底纹颜色<Caret /></RowButton>
              <RowButton><BottomBorder />下框线<Caret /></RowButton>
            </Stack>
          </SectionBody>
          <Footer text="表格样式选项" />
        </Section>
        <Section $w={360}>
          <SectionBody $left={6}>
            <Stack>
              <FieldRow>
                <SelectShell $w={133}>
                  <LineSelect aria-label="线型"><option></option></LineSelect>
                  <SelectDecor width="113" height="32"><path d="M0 16.500h96" stroke="#000" /><path d="M103 13h9l-4.500 6z" fill="#888" /></SelectDecor>
                </SelectShell>
              </FieldRow>
              <FieldRow>
                <SelectShell $w={133}>
                  <LineSelect aria-label="线宽"><option>{'0.5\u00a0 磅'}</option></LineSelect>
                  <SelectDecor width="113" height="32"><path d="M56 16.500h40" stroke="#000" /><path d="M103 13h9l-4.500 6z" fill="#888" /></SelectDecor>
                </SelectShell>
              </FieldRow>
              <RowButton $pad={5}><PenColor />笔颜色<Caret /></RowButton>
            </Stack>
            <BigButton $w={72} $gap={4}><DrawTable /><BigLabel>绘制表格</BigLabel></BigButton>
            <BigButton $w={72} $gap={6}><DiagonalHead /><BigLabel>斜线表头</BigLabel><Caret /></BigButton>
            <BigButton $w={44} $gap={10}><Eraser /><BigLabel>擦除</BigLabel></BigButton>
          </SectionBody>
          <Footer text="绘图边框" launcher />
        </Section>
        <Section $w={203}>
          <SectionBody $left={17}>
            <BigButton $w={36}><Cursor /><BigLabel>选择</BigLabel><Caret /></BigButton>
            <Stack $gap={17}>
              <RowButton><GridLines />查看网格线</RowButton>
              <RowButton><Props />属性</RowButton>
            </Stack>
          </SectionBody>
          <Footer text="表" />
        </Section>
        <Section $w={105}>
          <SectionBody $left={13}>
            <Stack $top={14}>
              <RowButton $h={48}><DelSmall />删除<Caret /></RowButton>
              <RowButton $h={48}><InsSmall />插入<Caret /></RowButton>
            </Stack>
          </SectionBody>
          <Footer text="行和列" launcher />
        </Section>
        <Section $w={145}>
          <SectionBody $left={12}>
            <Stack>
              <RowButton><MergeIcon kind="merge" />合并单元格</RowButton>
              <RowButton><MergeIcon kind="split" />拆分单元格</RowButton>
              <RowButton><MergeIcon kind="table" />拆分表格<Caret /></RowButton>
            </Stack>
          </SectionBody>
          <Footer text="合并" />
        </Section>
        <Section $w={319}>
          <SectionBody $left={9}>
            <BigButton $w={72}><AutoFit /><BigLabel>自动调整</BigLabel><Caret /></BigButton>
            <Divider />
            <Stack>
              <Size id="cell-height" label="高度:" icon={<HeightIcon />} />
              <Size id="cell-width" label="宽度:" icon={<WidthIcon />} />
            </Stack>
          </SectionBody>
          <Footer text="单元格大小" launcher />
        </Section>
        <Section $w={247}>
          <SectionBody $left={6}>
            <AlignGrid>
              {[0, 1, 2].map((v) => [0, 1, 2].map((h) => (
                <AlignButton key={`${v}${h}`} $on={v + h === 0} aria-label={`对齐 ${v + 1}-${h + 1}`}><AlignIcon v={v} h={h} /></AlignButton>
              )))}
            </AlignGrid>
            <Stack $gap={6}>
              <RowButton><TextDir />文字方向</RowButton>
              <RowButton><CellMargin />单元格边距</RowButton>
            </Stack>
          </SectionBody>
          <Footer text="对齐方式" />
        </Section>
        <Section $w={274}>
          <SectionBody $left={12} $right={12} $spread>
            <Stack>
              <RowButton><SortIcon />排序</RowButton>
              <RowButton><FxIcon />公式</RowButton>
              <RowButton><CalcIcon />快速计算<Caret /></RowButton>
            </Stack>
            <Stack>
              <RowButton disabled><RepeatIcon />重复标题行</RowButton>
              <RowButton><ConvertIcon />转换为文本</RowButton>
            </Stack>
          </SectionBody>
          <Footer text="数据" />
        </Section>
      </Ribbon>

      <QuickBar>
        <QuickTools>
          <PlainButton aria-label="撤销"><Undo c="#555" /></PlainButton>
          <Caret />
          <PlainButton aria-label="重做" disabled><Undo c="#aaa" flip /></PlainButton>
          <Caret c="#b0b4bd" />
          <PlainButton aria-label="打印预览"><Preview /></PlainButton>
          <PlainButton aria-label="保存"><Save /></PlainButton>
          <PlainButton aria-label="自定义"><svg width="12" height="10"><path d="M0 1h12" stroke="#000" strokeWidth="2" /><path d="M2 5h8l-4 5z" /></svg></PlainButton>
        </QuickTools>
        <DocTab>
          <DocTabName><WordDoc />文件1</DocTabName>
          <PlainButton aria-label="关闭文件1"><Cross /></PlainButton>
        </DocTab>
        <NewDoc aria-label="新建"><NewDocIcon /><Caret /></NewDoc>
      </QuickBar>

      <Workspace>
        <Corner><TabStop aria-label="制表符"><svg width="9" height="10"><path d="M1.500 0v8.500H9" fill="none" stroke="#000" strokeWidth="3" /></svg></TabStop></Corner>
        <HRuler>
          <HTrack>
            {segs.map(([w, c], i) => <Seg key={i} $w={w} $c={c}>{c && i < segs.length - 1 && <Dots />}</Seg>)}
            <HLabels>{hLabels.map((t, i) => <span key={i}>{t}</span>)}</HLabels>
            <HTicks />
            <RulerMarker $x={783} $y={-4} width="13" height="31" fill="#dfe3ea" stroke="#858b99"><path d="M.5.5h12v4l-6 6 6 6v3H.5v-3l6-6-6-6zM.5 20.500h12v9H.5z" /></RulerMarker>
            <RulerMarker $x={935} $y={6} width="13" height="12" fill="#dfe3ea" stroke="#858b99"><path d="M6.500.5l6 6v4H.5v-4zM.5 6.500h12" /></RulerMarker>
          </HTrack>
        </HRuler>
        <Scroll>
          <SplitHandle />
          <ScrollButton aria-label="向上滚动"><svg width="12" height="8"><path d="M0 8h12L6 0z" fill="#b0b0b0" /></svg></ScrollButton>
          <ScrollThumb><svg width="9" height="11"><path d="M0 1.500h9M0 5.500h9M0 9.500h9" stroke="#888" /></svg></ScrollThumb>
          <ScrollButton aria-label="向下滚动"><svg width="12" height="8"><path d="M0 0h12L6 8z" fill="#b0b0b0" /></svg></ScrollButton>
          <ScrollButton aria-label="上一页"><svg width="12" height="16" fill="#fff" stroke="#4a80c4" strokeWidth="1.500"><path d="M1 7l5-6 5 6zM1 15l5-6 5 6z" /></svg></ScrollButton>
          <ScrollButton aria-label="选择浏览对象"><svg width="12" height="12" fill="#fff" stroke="#4a80c4" strokeWidth="1.500"><circle cx="6" cy="6" r="5" /></svg></ScrollButton>
          <ScrollButton aria-label="下一页"><svg width="12" height="16" fill="#fff" stroke="#4a80c4" strokeWidth="1.500"><path d="M1 1l5 6 5-6zM1 9l5 6 5-6z" /></svg></ScrollButton>
        </Scroll>
        <VRuler>
          <VBlock $h={79} $gray />
          <VGap />
          {[79, 36, 76, 36, 77, 36, 71].map((h, i) => (
            <React.Fragment key={i}><VBlock $h={h} /><VMark /></React.Fragment>
          ))}
          <VBlock />
          <VLabels>{vLabels.map((t, i) => <span key={i}>{t}</span>)}</VLabels>
        </VRuler>
        <Canvas>
          <Page>
            <MarginTop />
            <TableLine>
              <MarginRule />
              <DocTable>
                <colgroup>
                  {[0, 1, 2, 3, 4, 5].map((i) => <col key={i} width={180} />)}
                  <col />
                </colgroup>
                <tbody>
                  {rows.map((r, n) => (
                    <Tr key={r.cells[0]} $tall={r.tall}>
                      {r.cells.map((c) => (
                        <Td key={c}><CellText $latin={/^[a-z=01]+$/.test(c)} $mixed={/^[a-z].*[^\x00-\x7f]/.test(c)}>{c}<Mark /></CellText></Td>
                      ))}
                      {[0, 1, 2].map((i) => <Td key={i}><Selected><Mark /></Selected></Td>)}
                      <td><EndMark $ruled={n === 0}><Mark /></EndMark></td>
                    </Tr>
                  ))}
                </tbody>
              </DocTable>
            </TableLine>
            <Paras><div><Mark /></div><div><Mark /></div><div><Mark /></div></Paras>
          </Page>
        </Canvas>
      </Workspace>

      <StatusBar>
        <Stat $w={84}>2 页</Stat>
        <Stat $w={95}>1 节</Stat>
        <Stat $w={104}>2/2</Stat>
        <Stat $w={116}>字数: 176</Stat>
        <Stat $w={218}>位置 : 11.48 厘米</Stat>
        <Stat $w={87}>10 行</Stat>
        <Stat $w={72}>1 列</Stat>
        <Stat $w={57}>改写</Stat>
        <Stat $w={72}>修订</Stat>
        <Stat $w={80}>拼写检查</Stat>
        <StatusRight>
          <ViewButton $on aria-label="页面视图"><svg width="18" height="18" fill="none" stroke="#555"><path d="M1 1h16v16H1z" strokeWidth="2" /><path d="M4 5.500h10M4 8.500h10M4 11.500h10M4 14.500h10" /></svg></ViewButton>
          <ViewButton aria-label="大纲视图"><svg width="18" height="18" fill="none" stroke="#666"><path d="M1 1h16v16H1z" strokeWidth="1.500" /><path d="M3 4.500h6M6 7.500h2M10 7.500h5M6 10.500h2M10 10.500h5M9 13.500h6" strokeWidth="1.500" /></svg></ViewButton>
          <Percent>130%</Percent>
          <PlainButton aria-label="缩小"><svg width="12" height="16"><path d="M0 9.500h12" stroke="#505050" strokeWidth="3" /></svg></PlainButton>
          <Zoom type="range" min="0" max="100" defaultValue="54" aria-label="显示比例" />
          <PlainButton aria-label="放大"><svg width="15" height="18"><path d="M0 10.500h15M7.500 3v15" stroke="#505050" strokeWidth="3" /></svg></PlainButton>
        </StatusRight>
      </StatusBar>

      <Taskbar>
        <Start aria-label="开始菜单"><WinLogo /></Start>
        <Apps>
          <TaskApp aria-label="DOSBox"><DosBox /></TaskApp>
          <TaskApp $line="split" aria-label="Edge"><Edge /></TaskApp>
          <TaskApp $line="split" aria-label="文件资源管理器"><Folder /></TaskApp>
          <TaskApp $line="full" aria-label="Firefox"><Firefox /></TaskApp>
          <TaskApp $line="split" aria-label="记事本"><Notebook /></TaskApp>
          <TaskApp $line="split" aria-label="迅雷"><Bolt /></TaskApp>
          <TaskApp $line="wide" $bg="#1cebff" aria-label="永中"><OLogo /></TaskApp>
          <TaskApp $line="split" aria-label="Typora"><Typora /></TaskApp>
          <TaskApp $line="full" aria-label="Doge"><Doge /></TaskApp>
          <TaskApp $line="full" aria-label="QQ"><Penguin /></TaskApp>
          <TaskApp $line="full" $bg="#fff900" aria-label="截图"><Aperture /></TaskApp>
          <TaskApp $line="split" aria-label="画图"><Palette /></TaskApp>
        </Apps>
        <Tray>
          <TrayItem $w={36} aria-label="更多图标"><svg width="20" height="12"><path d="M1 11l9-9 9 9" fill="none" stroke="#fff" strokeWidth="1.500" /></svg></TrayItem>
          <TrayItem $w={36} aria-label="消息"><svg width="22" height="22"><path d="M5 3v4M9 3v4" stroke="#fff" strokeWidth="2" /><path d="M3 5h9v3H3z" fill="#e2a02a" /><path d="M2 9h12v10H3z" fill="#e23b34" /><path d="M3 12h5v7H3z" fill="#fff" /><circle cx="14" cy="14" r="6" fill="#fff" stroke="#ef4a3c" strokeWidth="2.500" /><path d="M11 11l6 6" stroke="#ef4a3c" strokeWidth="3" /></svg></TrayItem>
          <TrayItem $w={36} aria-label="网络"><svg width="24" height="20" fill="none" stroke="#fff" strokeWidth="1.500"><path d="M6 1h17v13H4V8M1 1h5v7H1zM1 4h5M13 14v4M8 18h10" /></svg></TrayItem>
          <TrayItem $w={36} aria-label="音量"><svg width="22" height="18" fill="none" stroke="#fff" strokeWidth="1.500"><path d="M1 6h3l5-5v16l-5-5H1zM12 6q2 3 0 6M15 4q4 5 0 10" /><path d="M18 1q5 8 0 16" stroke="#555" /></svg></TrayItem>
          <TrayItem $w={33}>中</TrayItem>
          <Clock $w={93}><span>16:29</span><span>23/10/1</span></Clock>
          <TrayItem $w={60} aria-label="通知"><svg width="24" height="24"><path d="M0 0h24v19h-8l-5 5v-5H0z" fill="#fff" /><path d="M5 6h14M5 10h14M5 14h9" stroke="#000" /></svg></TrayItem>
          <TrayItem $w={12} aria-label="显示桌面" />
          <TrayItem $w={37} aria-label="空白" />
        </Tray>
        <Credit>CSDN @Bruce3131</Credit>
      </Taskbar>

      <Activate>
        <ActivateTitle>激活 Windows</ActivateTitle>
        <ActivateText>转到“设置”以激活 Windows。</ActivateText>
      </Activate>

      <MiniBar>
        <MiniLeft>
          <MiniRow $gap={3} $h={34}>
            <SelectShell $w={147}>
              <FontSelect aria-label="字体"><option>Calibri</option></FontSelect>
              <SelectDecor width="9" height="32"><path d="M0 13h9l-4.500 6z" fill="#888" /></SelectDecor>
            </SelectShell>
            <SelectShell $w={87}>
              <FontSelect aria-label="字号"><option>五号</option></FontSelect>
              <SelectDecor width="9" height="32"><path d="M0 13h9l-4.500 6z" fill="#888" /></SelectDecor>
            </SelectShell>
            <MiniButton $w={31} aria-label="增大字号"><svg width="30" height="26"><text x="5" y="22" fontFamily="Liberation Serif" fontWeight="700" fontSize="22" fill="#444">A</text><path d="M24 12V3M21 6l3-3 3 3" fill="none" stroke="#2c6fb5" strokeWidth="1.500" /></svg></MiniButton>
            <MiniButton $w={31} aria-label="减小字号"><svg width="30" height="26"><text x="5" y="22" fontFamily="Liberation Serif" fontWeight="700" fontSize="22" fill="#444">A</text><path d="M24 2v9M21 8l3 3 3-3" fill="none" stroke="#2c6fb5" strokeWidth="1.500" /></svg></MiniButton>
            <MiniButton $w={27} aria-label="格式刷"><svg width="4" height="4" /><Brush /></MiniButton>
          </MiniRow>
          <MiniRow $gap={10} $h={42}>
            <MiniButton $w={30} aria-label="加粗"><Letter>B</Letter></MiniButton>
            <MiniButton $w={18} aria-label="倾斜"><Letter $italic>I</Letter></MiniButton>
            <MiniButton $w={28} aria-label="居中"><svg width="28" height="20"><path d="M3 1h22M7 5h14M3 10h22M7 14h14M3 19h22" stroke="#555" strokeWidth="1.500" /></svg></MiniButton>
            <MiniButton $w={42} aria-label="突出显示"><svg width="26" height="24"><path d="M5 16L16 2l5 3-9 13H4z" fill="#dcebf8" stroke="#2c6fb5" strokeWidth="1.500" /><path d="M8 13l4 3" stroke="#ee8a3a" strokeWidth="2" /><path d="M0 20h25v4H0z" fill="#00f500" /></svg><Caret /></MiniButton>
            <MiniButton $w={42} aria-label="字体颜色"><svg width="26" height="24"><text x="5" y="16" fontFamily="Liberation Serif" fontWeight="700" fontSize="21" fill="#444">A</text><path d="M0 20h25v4H0z" fill="#002060" /></svg><Caret /></MiniButton>
            <MiniButton $w={42} aria-label="底纹"><Bucket /><Caret /></MiniButton>
            <MiniButton $w={42} aria-label="边框"><svg width="22" height="22" fill="none" stroke="#555"><path d="M1.500 1.500h19v19h-19z" strokeWidth="1.500" /><path d="M4 11h14M11 4v14" strokeWidth="1.500" strokeDasharray="2 2" /></svg><Caret /></MiniButton>
          </MiniRow>
        </MiniLeft>
        <MiniBig><InsBig />插入</MiniBig>
        <MiniBig><DelBig />删除</MiniBig>
      </MiniBar>

      <Menu role="menu">
        {menu.map((group, g) => (
          <React.Fragment key={g}>
            {g > 0 && <Sep />}
            {group.map((m) => (
              <Item key={m.t} role="menuitem" $on={m.on}>
                <ItemIcon>{m.icon}</ItemIcon>
                <ItemText>{m.t}(<u>{m.k}</u>){m.tail}</ItemText>
                {m.sub && <svg width="7" height="12"><path d="M0 0v12l7-6z" /></svg>}
              </Item>
            ))}
          </React.Fragment>
        ))}
      </Menu>
    </App_>
  );
}
